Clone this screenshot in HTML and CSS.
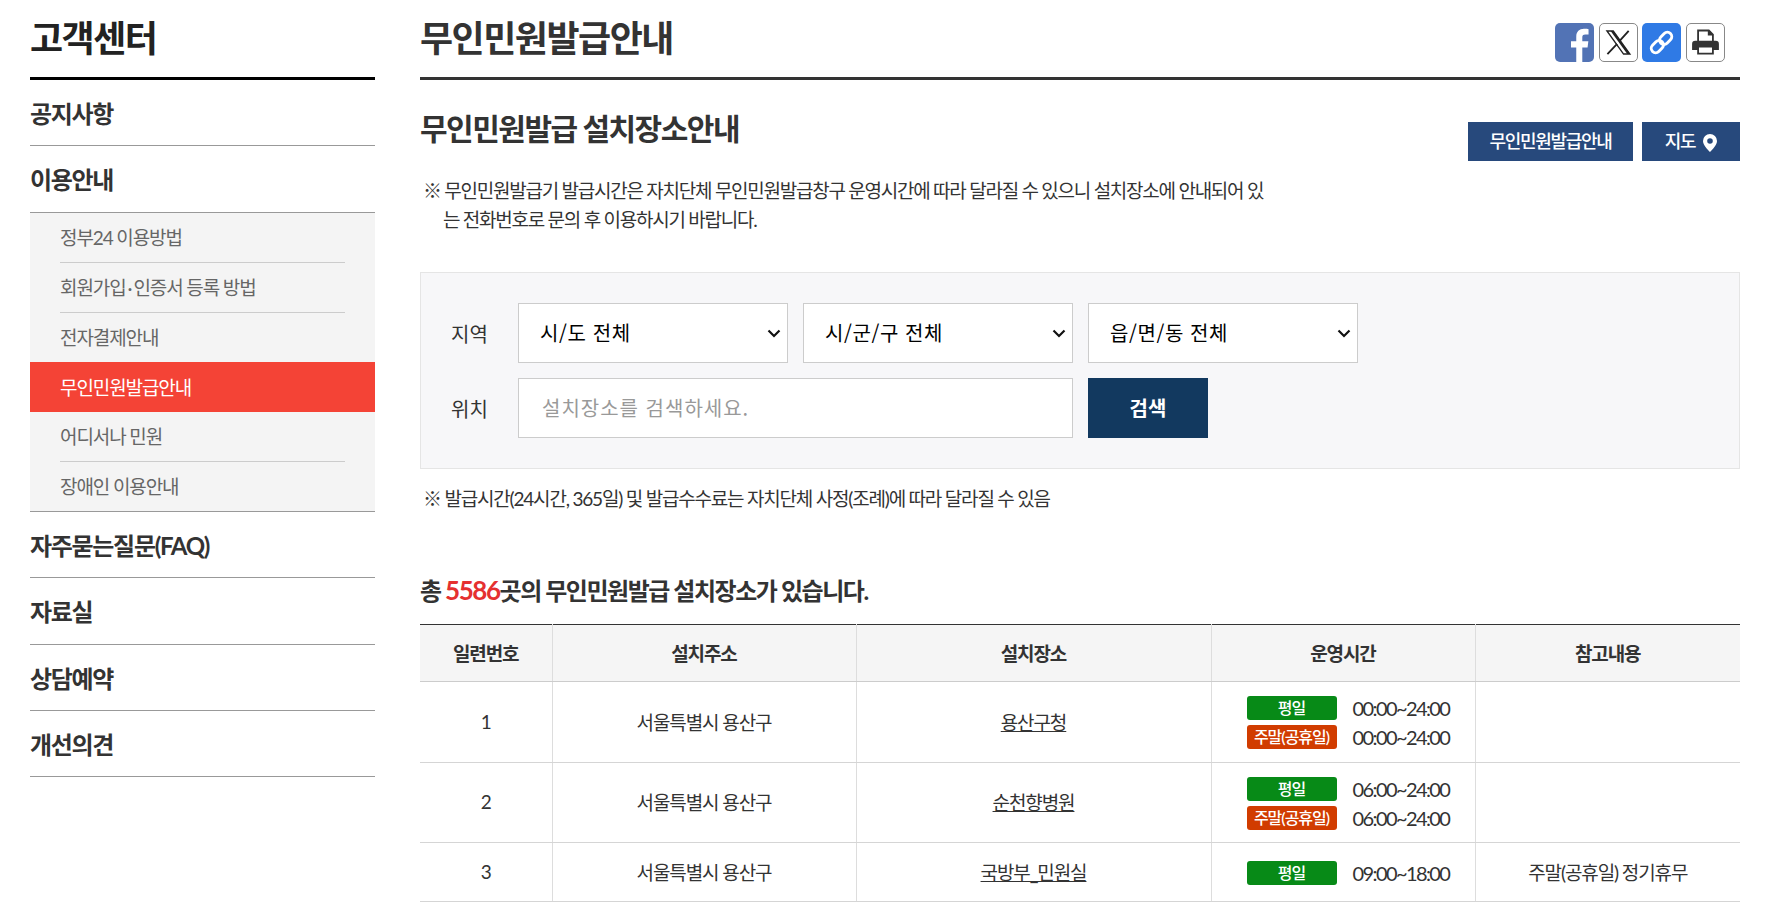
FILE: index.html
```html
<!DOCTYPE html>
<html lang="ko">
<head>
<meta charset="UTF-8">
<link rel="stylesheet" href="styles.css">
<title>무인민원발급안내</title>
</head>
<body>
<div class="wrap">

<aside class="side">
  <h2 class="side-title">고객센터</h2>
  <ul class="menu">
    <li class="menu-item"><a href="#">공지사항</a></li>
    <li class="menu-item tall"><a href="#">이용안내</a></li>
    <li class="sub">
      <a href="#">정부24 이용방법</a>
      <a href="#">회원가입<span class="dot">·</span>인증서 등록 방법</a>
      <a href="#">전자결제안내</a>
      <a href="#" class="on">무인민원발급안내</a>
      <a href="#">어디서나 민원</a>
      <a href="#">장애인 이용안내</a>
    </li>
    <li class="menu-item"><a href="#">자주묻는질문(FAQ)</a></li>
    <li class="menu-item tall"><a href="#">자료실</a></li>
    <li class="menu-item"><a href="#">상담예약</a></li>
    <li class="menu-item"><a href="#">개선의견</a></li>
  </ul>
</aside>

<main class="main">
  <div class="page-head">
    <h1>무인민원발급안내</h1>
    <div class="share">
      <a href="#" class="ico ico-fb" aria-label="페이스북">
        <svg viewBox="0 0 40 40" width="39" height="39"><path fill="#fff" d="M28 40V25h5.400l.8-6.400H28v-3.700c0-1.900.6-3.100 3.200-3.100h3.200V6.300c-.6-.1-2.500-.3-4.700-.3-4.700 0-7.900 2.800-7.900 8.100v4.500h-5.400V25h5.400v15z"/></svg>
      </a>
      <a href="#" class="ico ico-line" aria-label="X">
        <svg viewBox="0 0 40 40" width="37" height="37"><path fill="none" stroke="#222" stroke-width="1.500" d="M7.500 7.500h6.800l18 25h-6.800z"/><path fill="#222" d="M11.500 7.500h2.800l18 25h-2.800z"/><path fill="none" stroke="#222" stroke-width="2" d="M31 7.500 21.500 18M18.500 21.500 8 32.500"/></svg>
      </a>
      <a href="#" class="ico ico-link" aria-label="링크 복사">
        <svg viewBox="0 0 40 40" width="39" height="39"><g fill="none" stroke="#fff" stroke-width="3" transform="rotate(-45 20 20)"><rect x="7" y="15.500" width="14" height="9" rx="4.500"/><rect x="19" y="15.500" width="14" height="9" rx="4.500"/></g></svg>
      </a>
      <a href="#" class="ico ico-line" aria-label="인쇄">
        <svg viewBox="0 0 40 40" width="37" height="37"><path fill="#333" d="M11 6h13l5 5v8h-2v-6.500h-4.500V8H13v11h-2z"/><path fill="#333" fill-rule="evenodd" d="M9 18h22a3.500 3.500 0 0 1 3.500 3.500V28H29v5H11v-5H5.500v-6.500A3.500 3.500 0 0 1 9 18zM13 25.500v5.500h14v-5.500z"/></svg>
      </a>
    </div>
  </div>

  <div class="sec-head">
    <h3>무인민원발급 설치장소안내</h3>
    <div class="sec-btns">
      <a href="#" class="btn-navy btn-wide">무인민원발급안내</a>
      <a href="#" class="btn-navy btn-map">지도
        <svg viewBox="0 0 14 18" width="14" height="18"><path fill="#fff" fill-rule="evenodd" d="M7 0a7 7 0 0 1 7 7c0 4-4.500 8.500-7 11C4.500 15.500 0 11 0 7a7 7 0 0 1 7-7zm0 4.200a2.800 2.800 0 1 0 0 5.600 2.800 2.800 0 0 0 0-5.600z"/></svg>
      </a>
    </div>
  </div>

  <p class="note note-top">※ 무인민원발급기 발급시간은 자치단체 무인민원발급창구 운영시간에 따라 달라질 수 있으니 설치장소에 안내되어 있<br>는 전화번호로 문의 후 이용하시기 바랍니다.</p>

  <form class="search">
    <div class="search-row">
      <label>지역</label>
      <select><option>시/도 전체</option></select>
      <select><option>시/군/구 전체</option></select>
      <select><option>읍/면/동 전체</option></select>
    </div>
    <div class="search-row">
      <label>위치</label>
      <input type="text" placeholder="설치장소를 검색하세요.">
      <button type="button">검색</button>
    </div>
  </form>

  <p class="note note-bottom">※ 발급시간(24시간, 365일) 및 발급수수료는 자치단체 사정(조례)에 따라 달라질 수 있음</p>

  <p class="total">총 <em>5586</em>곳의 무인민원발급 설치장소가 있습니다.</p>

  <table class="list">
    <colgroup>
      <col class="c1"><col class="c2"><col class="c3"><col class="c4"><col class="c5">
    </colgroup>
    <thead>
      <tr><th>일련번호</th><th>설치주소</th><th>설치장소</th><th>운영시간</th><th>참고내용</th></tr>
    </thead>
    <tbody>
      <tr class="r-first">
        <td>1</td><td>서울특별시 용산구</td><td><a href="#">용산구청</a></td>
        <td class="hours">
          <div><span class="tag tag-day">평일</span>00:00~24:00</div>
          <div><span class="tag tag-end">주말(공휴일)</span>00:00~24:00</div>
        </td>
        <td></td>
      </tr>
      <tr class="r-two">
        <td>2</td><td>서울특별시 용산구</td><td><a href="#">순천향병원</a></td>
        <td class="hours">
          <div><span class="tag tag-day">평일</span>06:00~24:00</div>
          <div><span class="tag tag-end">주말(공휴일)</span>06:00~24:00</div>
        </td>
        <td></td>
      </tr>
      <tr class="r-one">
        <td>3</td><td>서울특별시 용산구</td><td><a href="#">국방부_민원실</a></td>
        <td class="hours">
          <div><span class="tag tag-day">평일</span>09:00~18:00</div>
        </td>
        <td>주말(공휴일) 정기휴무</td>
      </tr>
    </tbody>
  </table>
</main>

</div>
</body>
</html>
```

FILE: styles.css
```css
html, body {margin: 0; padding: 0; background: #fff; overflow: hidden; height: 904px;}
body {font-family: 'Lato', 'Noto Sans CJK KR', sans-serif; font-size: 19px; color: #333; letter-spacing: -1.1px;}
a {color: inherit; text-decoration: none}
h1, h2, h3, p, ul {margin: 0; padding: 0; list-style: none}

.wrap {display: flex; gap: 45px; padding: 0 37px 0 30px;}

/* left menu */
.side {width: 345px; flex: none;}
.side-title {height: 77px; line-height: 76px; font-size: 36px; font-weight: 700; color: #222; border-bottom: 3px solid #000; letter-spacing: -1.5px;}
.menu-item {height: 65px; line-height: 67px; font-size: 24px; font-weight: 700; border-bottom: 1px solid #999; letter-spacing: -1.3px;}
.menu-item.tall {height: 66px;}
.menu-item a {display: block;}
.sub {background: #f4f4f4; border-bottom: 1px solid #999; height: 298px;}
.sub a {display: block; height: 49px; line-height: 50px; margin: 0 30px; color: #666; border-bottom: 1px solid #ccc; font-size: 19px;}
.sub a:last-child {border-bottom: 0;}
.sub a.on {margin: -1px 0 0; padding: 0 30px; height: 50px; line-height: 52px; background: #f44336; color: #fff; border-bottom: 0;}
.dot {margin: 0 2px;}

/* main column */
.main {flex: 1; min-width: 0;}
.page-head {display: flex; justify-content: space-between; height: 77px; border-bottom: 3px solid #333;}
.page-head h1 {font-size: 36px; font-weight: 700; line-height: 76px; letter-spacing: -1.5px;}
.share {display: flex; gap: 4.6px; padding: 23px 15px 0 0;}
.ico {width: 39px; height: 39px; border-radius: 5px; box-sizing: border-box; display: flex; align-items: center; justify-content: center; overflow: hidden;}
.ico-fb {background: #5273b5;}
.ico-line {border: 1px solid #888; background: #fff;}
.ico-link {background: #2f7ae5;}

.sec-head {display: flex; justify-content: space-between; padding-top: 27px;}
.sec-head h3 {font-size: 30px; font-weight: 700; line-height: 42px; letter-spacing: -1.5px;}
.sec-btns {display: flex; gap: 9px; padding-top: 15px;}
.btn-navy {height: 39px; padding-bottom: 3px; box-sizing: border-box; display: flex; align-items: center; justify-content: center; gap: 8px; background: #27497c; color: #fff; font-size: 18px; font-weight: 500; letter-spacing: -1.3px;}
.btn-wide {width: 165px;}
.btn-map {width: 98px;}
.btn-map svg {margin-top: 5px;}

.note {font-size: 19px; line-height: 29px; padding-left: 3px; letter-spacing: -1.2px;}
.note-top {margin-top: 15px; padding-left: 23px; text-indent: -20px; letter-spacing: -1.25px;}
.note-bottom {margin-top: 15px;}

.search {margin-top: 38px; height: 197px; box-sizing: border-box; padding: 30px 30px 0; background: #f7f7f9; border: 1px solid #e5e5e5; display: flex; flex-direction: column; gap: 15px;}
.search-row {display: flex; gap: 15px; align-items: center;}
.search-row label {width: 52px; font-size: 20px; letter-spacing: 0;}
.search select, .search input {height: 60px; box-sizing: border-box; border: 1px solid #ccc; background-color: #fff; font-family: 'Noto Sans CJK KR', sans-serif; font-size: 20px; letter-spacing: .6px; padding: 0 21px 2px; border-radius: 0; color: #000;}
.search select {width: 270px; appearance: none; background-image: url("data:image/svg+xml,%3Csvg xmlns='http://www.w3.org/2000/svg' width='14' height='9'%3E%3Cpath fill='none' stroke='%23111' stroke-width='2.200' d='M1.500 1.500 7 7l5.500-5.500'/%3E%3C/svg%3E"); background-repeat: no-repeat; background-position: right 6px center;}
.search input {width: 555px; padding: 0 23px 2px; letter-spacing: 1px;}
.search input::placeholder {color: #999;}
.search button {width: 120px; height: 60px; padding: 0 0 2px; border: 0; background: #12395f; color: #fff; font-family: 'Noto Sans CJK KR', sans-serif; font-size: 20px; font-weight: 700;}

.total {margin-top: 59px; font-size: 24px; font-weight: 700; line-height: 36px; letter-spacing: -1.45px;}
.total em {font-style: normal; font-size: 26px; color: #e53030;}

.list {margin-top: 15px; width: 100%; border-collapse: collapse; table-layout: fixed; border-top: 1px solid #333;}
.c1 {width: 132px;} .c2 {width: 304px;} .c3 {width: 355px;} .c4 {width: 264px;} .c5 {width: 265px;}
.list th {height: 55px; background: #f5f5f5; font-size: 19px; font-weight: 700; border-bottom: 1px solid #ccc; border-left: 1px solid #ddd; padding: 0 0 1px;}
.list td {font-size: 19px; text-align: center; border-bottom: 1px solid #d5d5d5; border-left: 1px solid #ddd; padding: 0 0 2px;}
.list th:first-child, .list td:first-child {border-left: 0;}
.list td a {text-decoration: underline;}
.r-first {height: 81px;}
.r-two {height: 80px;}
.r-one {height: 59px;}
.list .hours {text-align: left; padding: 1px 0 0 35px; font-size: 20px; letter-spacing: -1.6px;}
.hours div {display: flex; align-items: center; height: 29px;}
.tag {width: 90px; height: 24px; line-height: 23px; border-radius: 3px; margin-right: 16px; color: #fff; text-align: center; font-size: 16px; font-weight: 500; letter-spacing: -1px;}
.tag-day {background: #078a17;}
.tag-end {background: #d13c00;}
```
